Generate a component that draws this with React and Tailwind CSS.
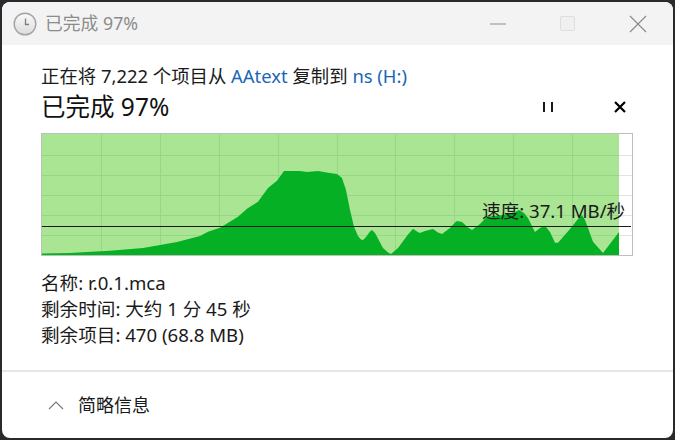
const font = { fontFamily: '"Noto Sans", "Noto Sans CJK SC", sans-serif' };

const area = "M42,253.5 L70,253 L87,252 L110,250.7 L143,248 L177,242 L200,236 L208,231.7 L220,227.7 L238,216.7 L247,208.7 L258,201.7 L268,188 L277,180.7 L284,171 L300,171 L307,172 L318,171 L328,172.7 L337,174 L342,178 L346,190 L350,210 L354,226.7 L358,236 L361,239.5 L363,240 L366,237 L370,231.5 L372,230 L375,233 L377,236.7 L383,248 L388,252.5 L391,254 L398,248 L408,234.5 L413,228.7 L417,231.5 L420,233 L425,231 L433,229 L438,232.5 L442,234 L450,228 L455,222.5 L457,221 L462,222 L468,227.5 L472,230 L480,224 L487,216.7 L503,215 L515,212 L519,210 L524,213 L528,218 L535,232 L540,228 L545,225.7 L550,232 L555,242.7 L558,242.7 L570,229 L578,219 L582,215 L585,220 L588,228 L593,241.7 L603,253 L619,232 L619,255 L42,255 Z";

function Clock() {
  return (
    <svg width="24" height="24" viewBox="0 0 24 24">
      <defs>
        <linearGradient id="clockFace" x1="0" y1="0" x2="0" y2="1">
          <stop offset="0" stopColor="#fafafa" />
          <stop offset="1" stopColor="#dcdcdc" />
        </linearGradient>
      </defs>
      <circle cx="12" cy="12" r="10.8" fill="url(#clockFace)" stroke="#a3a3a3" strokeWidth="1.4" />
      <path d="M12.5 6.5 V12.5 H16" fill="none" stroke="#7d7d7d" strokeWidth="1.3" />
    </svg>
  );
}

function Chart() {
  const vs = [101, 160, 219, 278, 337, 395, 454, 513, 572];
  const hs = [155, 175, 195, 215, 235];
  return (
    <div className="relative w-[592px] h-[123px] border border-[#bcc0bc] bg-white">
      <svg width="590" height="121" viewBox="42 134 590 121" className="block">
        <rect x="42" y="134" width="577" height="121" fill="#a9e592" />
        {vs.map((x) => (
          <rect key={x} x={x} y="134" width="1" height="121" fill="#95d68a" />
        ))}
        {hs.map((y) => (
          <g key={y}>
            <rect x="42" y={y} width="577" height="1" fill="#95d68a" />
            <rect x="619" y={y} width="13" height="1" fill="#e3e3e3" />
          </g>
        ))}
        <path d={area} fill="#06b025" />
        <rect x="42" y="226" width="589" height="1" fill="#1a1a1a" />
      </svg>
      <div className="absolute left-[440px] top-[64px] text-[18.6px] leading-[26px] text-[#1a1a1a] whitespace-nowrap">
        速度: 37.1 MB/秒
      </div>
    </div>
  );
}

export default function App() {
  return (
    <div style={font} className="w-[675px] h-[440px] bg-[#2a2a2e] p-[2px] overflow-hidden">
      <div className="w-[671px] h-[436px] rounded-[8px] bg-white overflow-hidden flex flex-col">
        <div className="h-[43px] bg-[#f3f3f3] flex items-center pl-[11px] shrink-0">
          <Clock />
          <span className="ml-[8px] text-[17.8px] text-[#8c8c8c]">已完成 97%</span>
          <div className="ml-auto flex items-center">
            <svg width="18" height="18" viewBox="0 0 18 18" className="mr-[52px]">
              <path d="M1 9 H17" stroke="#8f8f8f" strokeWidth="1" />
            </svg>
            <svg width="18" height="18" viewBox="0 0 18 18" className="mr-[52px]">
              <rect x="1.5" y="1.5" width="14" height="14" rx="1.5" fill="#f0f0f0" stroke="#dedede" />
            </svg>
            <svg width="18" height="18" viewBox="0 0 18 18" className="mr-[26px]">
              <path d="M1 1 L17 17 M17 1 L1 17" stroke="#8a8a8a" strokeWidth="1.1" fill="none" />
            </svg>
          </div>
        </div>

        <div className="pl-[39px] flex-1 flex flex-col">
          <div className="mt-[18px] text-[18.4px] leading-[26px] text-[#1a1a1a] whitespace-nowrap">
            正在将 7,222 个项目从 <span className="text-[#1a66b5]">AAtext</span> 复制到{" "}
            <span className="text-[#1a66b5]">ns (H:)</span>
          </div>
          <div className="relative mt-[1px] h-[43px] text-[24.5px] leading-[34px] text-[#111111] whitespace-nowrap">
            已完成 97%
            <svg width="12" height="12" viewBox="0 0 12 12" className="absolute left-[501px] top-[11px]">
              <path d="M2 1 V11 M10 1 V11" stroke="#000" strokeWidth="1.8" />
            </svg>
            <svg width="14" height="14" viewBox="0 0 14 14" className="absolute left-[572px] top-[10px]">
              <path d="M2 2 L12 12 M12 2 L2 12" stroke="#000" strokeWidth="2.2" />
            </svg>
          </div>
          <Chart />
          <div className="mt-[14px] text-[18.6px] leading-[26px] text-[#1a1a1a] whitespace-nowrap">
            <div>名称: r.0.1.mca</div>
            <div>剩余时间: 大约 1 分 45 秒</div>
            <div>剩余项目: 470 (68.8 MB)</div>
          </div>
        </div>

        <div className="h-[68px] border-t-2 border-[#e6e6e6] flex items-center pl-[46px] shrink-0">
          <svg width="16" height="10" viewBox="0 0 16 10">
            <path d="M1 9 L8 2 L15 9" stroke="#7a7a7a" strokeWidth="1.2" fill="none" />
          </svg>
          <span className="ml-[14px] text-[18px] text-[#1a1a1a]">简略信息</span>
        </div>
      </div>
    </div>
  );
}
